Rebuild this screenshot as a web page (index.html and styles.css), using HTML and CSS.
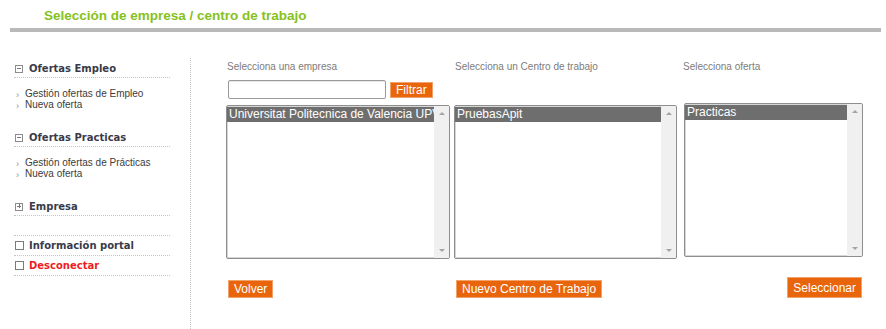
FILE: index.html
```html
<!DOCTYPE html>
<html lang="es">
<head>
    <meta charset="UTF-8">
    <meta name="viewport" content="width=device-width, initial-scale=1.0">
    <title>Selección de empresa / centro de trabajo</title>
    <link rel="stylesheet" href="styles.css">
</head>
<body>
    <div class="page-header">
        <h1>Selección de empresa / centro de trabajo</h1>
        <div class="header-bar"></div>
    </div>

    <div class="layout">
        <aside class="sidebar">
            <div class="menu-head"><span class="box minus"></span>Ofertas Empleo</div>
            <ul class="menu-links">
                <li>Gestión ofertas de Empleo</li>
                <li>Nueva oferta</li>
            </ul>

            <div class="menu-head"><span class="box minus"></span>Ofertas Practicas</div>
            <ul class="menu-links">
                <li>Gestión ofertas de Prácticas</li>
                <li>Nueva oferta</li>
            </ul>

            <div class="menu-head"><span class="box plus"></span>Empresa</div>
            <div class="menu-plain"></div>
            <div class="menu-plain"><span class="box empty"></span>Información portal</div>
            <div class="menu-plain logout"><span class="box empty"></span>Desconectar</div>
        </aside>

        <main class="content">
            <div class="selector-grid">
                <label class="field-label">Selecciona una empresa</label>
                <label class="field-label">Selecciona un Centro de trabajo</label>
                <label class="field-label">Selecciona oferta</label>

                <div class="filter-row">
                    <input type="text" class="filter-input">
                    <button class="btn btn-small">Filtrar</button>
                </div>
                <div></div>
                <div></div>

                <div class="listbox list-empresa">
                    <div class="list-items">
                        <div class="list-item selected">Universitat Politecnica de Valencia UPV</div>
                    </div>
                    <div class="scroll-track"><span class="arrow-up"></span><span class="arrow-down"></span></div>
                </div>
                <div class="listbox list-centro">
                    <div class="list-items">
                        <div class="list-item selected">PruebasApit</div>
                    </div>
                    <div class="scroll-track"><span class="arrow-up"></span><span class="arrow-down"></span></div>
                </div>
                <div class="listbox list-oferta">
                    <div class="list-items">
                        <div class="list-item selected">Practicas</div>
                    </div>
                    <div class="scroll-track"><span class="arrow-up"></span><span class="arrow-down"></span></div>
                </div>

                <div class="action"><button class="btn">Volver</button></div>
                <div class="action"><button class="btn">Nuevo Centro de Trabajo</button></div>
                <div class="action action-right"><button class="btn">Seleccionar</button></div>
            </div>
        </main>
    </div>
</body>
</html>
```

FILE: styles.css
```css
:root {
    --green: #86c21c;
    --orange: #e8650c;
    --dots: #c4c4c4;
    --menu-text: #3a3a48;
}

body {
    margin: 0;
    font-family: 'Liberation Sans', Arial, sans-serif;
    background-color: #ffffff;
    color: #333333;
}

/* header */
.page-header h1 {
    margin: 0;
    padding: 8px 0 0 44px;
    font-size: 13.5px;
    line-height: 16px;
    font-weight: bold;
    color: var(--green);
}

.header-bar {
    margin: 4px 5px 0 10px;
    height: 4px;
    background-color: #b9b9b9;
}

.layout {
    display: flex;
    margin-top: 26px;
    min-height: 271px;
}

/* sidebar menu */
.sidebar {
    width: 156px;
    padding: 2px 20px 0 14px;
    border-right: 1px dotted var(--dots);
}

.menu-head,
.menu-plain {
    display: flex;
    align-items: center;
    font-family: 'DejaVu Sans', Verdana, sans-serif;
    font-size: 10px;
    font-weight: bold;
    color: var(--menu-text);
    border-bottom: 1px dotted var(--dots);
}

.menu-head {
    height: 17px;
}

.menu-plain {
    height: 19px;
}

.logout {
    color: #ee1c24;
}

.box {
    display: inline-block;
    position: relative;
    box-sizing: border-box;
    width: 8px;
    height: 8px;
    margin: 0 6px 0 1px;
    border: 1px solid #8c8c8c;
}

.box.empty {
    width: 9px;
    height: 9px;
    margin-right: 5px;
    border-color: #7a7a7a;
}

.box.minus::before,
.box.plus::before,
.box.plus::after {
    content: '';
    position: absolute;
    background-color: #777777;
}

.box.minus::before,
.box.plus::before {
    left: 1px;
    top: 2px;
    width: 4px;
    height: 1px;
}

.box.plus::after {
    left: 2.5px;
    top: 0.5px;
    width: 1px;
    height: 4px;
}

.menu-links {
    list-style: none;
    margin: 10px 0 19px;
    padding: 0;
}

.menu-links li {
    display: flex;
    align-items: center;
    height: 11px;
    font-size: 10px;
    line-height: 11px;
    color: #3c3c3c;
}

.menu-links li::before {
    content: '\203A';
    width: 9px;
    margin: 3px 0 0 2px;
    font-size: 9px;
    line-height: 9px;
    color: #8a8a8a;
}

/* main selector */
.content {
    flex: 1;
    padding: 3px 0 0 35px;
}

.selector-grid {
    display: grid;
    grid-template-columns: 228px 228px 180px;
}

.field-label {
    padding-left: 1px;
    font-size: 10px;
    line-height: 12px;
    color: #7c7c7c;
}

.filter-row {
    display: flex;
    align-items: center;
    margin: 7px 0 6px 2px;
}

.filter-input {
    box-sizing: border-box;
    width: 158px;
    height: 19px;
    margin: 0 4px 0 0;
    border: 1px solid #9a9a9a;
    border-radius: 2px;
    box-shadow: inset 0 1px 1px rgba(0, 0, 0, 0.1);
}

.btn {
    border: 1px solid #f2a36c;
    background-color: var(--orange);
    color: #ffffff;
    font-family: 'Liberation Sans', Arial, sans-serif;
    font-size: 12px;
    line-height: 14px;
    padding: 1px 5px;
    cursor: pointer;
}

.btn-small {
    padding: 0 5px;
}

.listbox {
    display: flex;
    box-sizing: border-box;
    height: 154px;
    border: 1px solid #8e8e8e;
    border-radius: 2px;
    box-shadow: inset 0 0 0 1px #d6d6d6;
    overflow: hidden;
}

.list-empresa {
    width: 224px;
}

.list-centro {
    width: 223px;
}

.list-oferta {
    width: 179px;
    margin: -2px 0 0 2px;
}

.list-items {
    flex: 1;
    min-width: 0;
    padding-top: 1px;
}

.list-item {
    white-space: nowrap;
    overflow: hidden;
    font-size: 12px;
    line-height: 15px;
    padding-left: 2px;
}

.list-item.selected {
    background-color: #6e6e6e;
    color: #ffffff;
}

.scroll-track {
    position: relative;
    width: 15px;
    background-color: #f0f0f0;
}

.arrow-up,
.arrow-down {
    position: absolute;
    left: 5px;
    width: 0;
    height: 0;
    border-left: 3px solid transparent;
    border-right: 3px solid transparent;
}

.arrow-up {
    top: 6px;
    border-bottom: 3px solid #a3a3a3;
}

.arrow-down {
    bottom: 6px;
    border-top: 3px solid #a3a3a3;
}

.action {
    margin-top: 20px;
    padding-left: 2px;
}

.action-right {
    display: flex;
    justify-content: flex-end;
    margin-top: 18px;
    padding-right: 0;
}
```
